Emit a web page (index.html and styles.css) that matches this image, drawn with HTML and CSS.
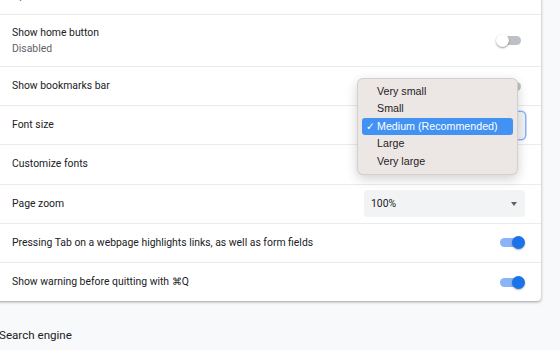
FILE: index.html
```html
<!DOCTYPE html>
<html lang="en">
<head>
  <meta charset="UTF-8">
  <meta name="viewport" content="width=device-width, initial-scale=1.0">
  <title>Settings - Appearance</title>
  <link rel="stylesheet" href="styles.css">
</head>
<body>
  <div class="page">
    <div class="card">
      <div class="row row-tall">
        <div class="label">
          <div>Theme</div>
          <div class="sub">Open Chrome Web Store</div>
        </div>
      </div>

      <div class="row row-tall">
        <div class="label">
          <div>Show home button</div>
          <div class="sub">Disabled</div>
        </div>
        <span class="toggle"></span>
      </div>

      <div class="row">
        <div class="label">Show bookmarks bar</div>
        <span class="toggle"></span>
      </div>

      <div class="row">
        <div class="label">Font size</div>
        <div class="select-wrap">
          <div class="select focused">
            <span>Medium (Recommended)</span>
            <span class="caret"></span>
          </div>
          <!-- native popup, drawn open -->
          <ul class="menu">
            <li>Very small</li>
            <li>Small</li>
            <li class="selected"><span class="check">✓</span>Medium (Recommended)</li>
            <li>Large</li>
            <li>Very large</li>
          </ul>
        </div>
      </div>

      <div class="row">
        <div class="label">Customize fonts</div>
      </div>

      <div class="row">
        <div class="label">Page zoom</div>
        <div class="select-wrap">
          <div class="select">
            <span>100%</span>
            <span class="caret"></span>
          </div>
        </div>
      </div>

      <div class="row">
        <div class="label">Pressing Tab on a webpage highlights links, as well as form fields</div>
        <span class="toggle on"></span>
      </div>

      <div class="row">
        <div class="label">Show warning before quitting with ⌘Q</div>
        <span class="toggle on"></span>
      </div>
    </div>

    <h2 class="section-title">Search engine</h2>
  </div>
</body>
</html>
```

FILE: styles.css
```css
/* Base */
body {
  margin: 0;
  background-color: #f8f9fa;
  font-family: Roboto, 'Noto Sans', sans-serif;
  font-size: 10.4px;
  color: #202124;
  overflow: hidden;
}
.page {
  margin-left: -4px;
  width: 545px;
}
.card {
  margin-top: -38px;
  background: #fff;
  border-radius: 4px;
  box-shadow: 0 1px 2px rgba(60,64,67,0.3), 0 1px 3px 1px rgba(60,64,67,0.15);
}
.row {
  display: flex;
  align-items: center;
  justify-content: space-between;
  box-sizing: border-box;
  height: 39.2px;
  padding: 0 16px;
  border-top: 1px solid #ebebeb;
}
.row:first-child {
  border-top: none;
}
.row-tall {
  height: 52px;
}
.label {
  line-height: 16px;
}
.sub {
  color: #5f6368;
}

/* Toggles */
.toggle {
  position: relative;
  display: block;
  width: 29px;
  height: 13px;
  flex-shrink: 0;
}
.toggle::before {
  content: '';
  position: absolute;
  left: 4px;
  top: 2px;
  width: 21px;
  height: 9px;
  border-radius: 5px;
  background: #bdc1c6;
}
.toggle::after {
  content: '';
  position: absolute;
  left: 0;
  top: 0;
  width: 13px;
  height: 13px;
  border-radius: 50%;
  background: #fff;
  box-shadow: 0 1px 2px rgba(0,0,0,0.4);
}
.toggle.on::before {
  background: #8ab4f8;
}
.toggle.on::after {
  left: 16px;
  background: #1a73e8;
  box-shadow: 0 1px 2px rgba(0,0,0,0.3);
}

/* Selects */
.select-wrap {
  position: relative;
}
.select {
  display: flex;
  align-items: center;
  justify-content: space-between;
  box-sizing: border-box;
  width: 161px;
  height: 27px;
  padding: 0 8px 0 7px;
  background: #f1f3f4;
  border-radius: 4px;
}
.select.focused {
  box-shadow: 0 0 0 1.5px #8ab4f8;
}
.caret {
  width: 0;
  height: 0;
  border-left: 3.5px solid transparent;
  border-right: 3.5px solid transparent;
  border-top: 4px solid #5f6368;
}

/* Native popup menu */
.menu {
  position: absolute;
  left: -7px;
  top: -34px;
  width: 161px;
  box-sizing: border-box;
  margin: 0;
  padding: 4px;
  list-style: none;
  background: #ece6e4;
  border: 1px solid rgba(0,0,0,0.1);
  border-radius: 6px;
  box-shadow: 0 4px 12px rgba(0,0,0,0.18);
  font-family: 'Liberation Sans', Arial, sans-serif;
  font-size: 10.7px;
  color: #1d1d1f;
  z-index: 2;
}
.menu li {
  position: relative;
  height: 17.5px;
  line-height: 17.5px;
  padding-left: 15px;
  border-radius: 3px;
}
.menu li.selected {
  background: #4192f3;
  color: #fff;
}
.check {
  position: absolute;
  left: 4px;
  font-family: 'DejaVu Sans', sans-serif;
  font-size: 10.5px;
}

.section-title {
  margin: 26px 0 0 3px;
  font-size: 11.6px;
  font-weight: 400;
  line-height: 16px;
  color: #202124;
}
```
